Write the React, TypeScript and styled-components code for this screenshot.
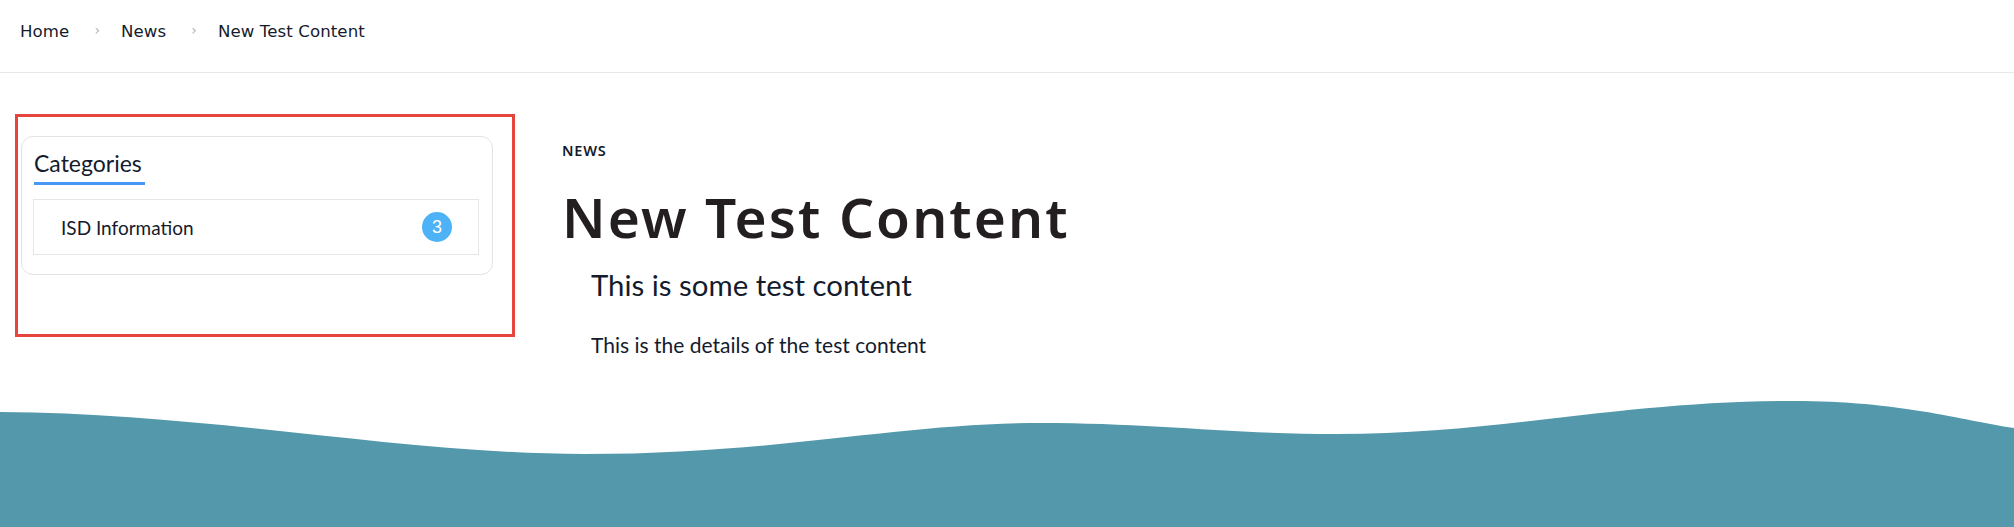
import styled, { createGlobalStyle } from 'styled-components';

const GlobalStyle = createGlobalStyle`
  html, body {
    margin: 0;
    padding: 0;
    background: #ffffff;
  }
  * {
    box-sizing: border-box;
  }
`;

const Page = styled.div`
  display: flex;
  flex-direction: column;
  min-height: 100vh;
  overflow: hidden;
`;

const Breadcrumbs = styled.nav`
  display: flex;
  align-items: center;
  height: 73px;
  padding: 0 0 10px 20px;
  border-bottom: 1px solid #e8e8e8;
  font-family: 'DejaVu Sans', 'Noto Sans', sans-serif;
  font-size: 16.6px;
  color: #141b2d;
`;

const Crumb = styled.span`
  letter-spacing: 0.1px;
`;

const Separator = styled.span`
  display: inline-block;
  margin: 0 21px 0 25px;
  color: #b4b4b8;
  font-size: 14px;
  vertical-align: 2px;
`;

const Body = styled.div`
  display: flex;
  align-items: flex-start;
  gap: 47px;
  padding: 41px 0 0 15px;
`;

const Sidebar = styled.aside`
  width: 500px;
  height: 223px;
  border: 3px solid #e5453d;
  padding: 19px 19px 0 3px;
`;

const Card = styled.div`
  border: 1px solid #e3e3e3;
  border-radius: 12px;
  padding: 12px 13px 19px 11px;
  font-family: Lato, 'Noto Sans', sans-serif;
  color: #141b2d;
`;

const CardTitle = styled.h3`
  display: inline-block;
  margin: 0 0 14px 1px;
  padding: 0 3px 5px 0;
  font-size: 23px;
  font-weight: 400;
  line-height: 28px;
  border-bottom: 3px solid #4896f6;
`;

const CategoryRow = styled.div`
  display: flex;
  align-items: center;
  justify-content: space-between;
  height: 56px;
  padding: 0 26px 0 27px;
  border: 1px solid #e6e6e6;
  font-size: 19px;
`;

const Badge = styled.span`
  display: flex;
  align-items: center;
  justify-content: center;
  width: 30px;
  height: 30px;
  border-radius: 50%;
  background: #4db2f6;
  color: #ffffff;
  font-family: 'Liberation Sans', Arial, sans-serif;
  font-size: 18px;
`;

const Article = styled.main`
  padding-top: 26px;
  color: #231f20;
`;

const Kicker = styled.div`
  font-family: 'Noto Sans', 'DejaVu Sans', sans-serif;
  font-size: 14.5px;
  font-weight: 600;
  letter-spacing: 0.8px;
  color: #141b2d;
`;

const Title = styled.h1`
  margin: 25px 0 0 0;
  font-family: 'Noto Sans', 'Open Sans', sans-serif;
  font-size: 55px;
  font-weight: 600;
  line-height: 64px;
  letter-spacing: 2.1px;
`;

const Lead = styled.h2`
  margin: 18px 0 0 29px;
  font-family: Lato, 'Noto Sans', sans-serif;
  font-size: 29.4px;
  font-weight: 400;
  line-height: 36px;
  color: #141b2d;
`;

const Details = styled.p`
  margin: 29px 0 0 29px;
  font-family: Lato, 'Noto Sans', sans-serif;
  font-size: 21px;
  line-height: 26px;
  color: #141b2d;
`;

const Wave = styled.svg`
  display: block;
  width: 100%;
  height: 132px;
  margin-top: auto;
`;

const crumbs = ['Home', 'News', 'New Test Content'];

const App: React.FC = () => {
  return (
    <>
      <GlobalStyle />
      <Page>
        <Breadcrumbs>
          {crumbs.map((c, i) => (
            <span key={c}>
              {i > 0 && <Separator>›</Separator>}
              <Crumb>{c}</Crumb>
            </span>
          ))}
        </Breadcrumbs>
        <Body>
          <Sidebar>
            <Card>
              <CardTitle>Categories</CardTitle>
              <CategoryRow>
                <span>ISD Information</span>
                <Badge>3</Badge>
              </CategoryRow>
            </Card>
          </Sidebar>
          <Article>
            <Kicker>NEWS</Kicker>
            <Title>New Test Content</Title>
            <Lead>This is some test content</Lead>
            <Details>This is the details of the test content</Details>
          </Article>
        </Body>
        <Wave viewBox='0 0 2014 132' preserveAspectRatio='none'>
          <path
            fill='#5499ab'
            d='M0,17 C210,18 400,59 585,59 C780,59 900,28 1041,28 C1150,28 1230,39 1337,39 C1500,39 1620,6 1793,6 C1900,6 1960,25 2014,33 L2014,132 L0,132 Z'
          />
        </Wave>
      </Page>
    </>
  );
};

export default App;
